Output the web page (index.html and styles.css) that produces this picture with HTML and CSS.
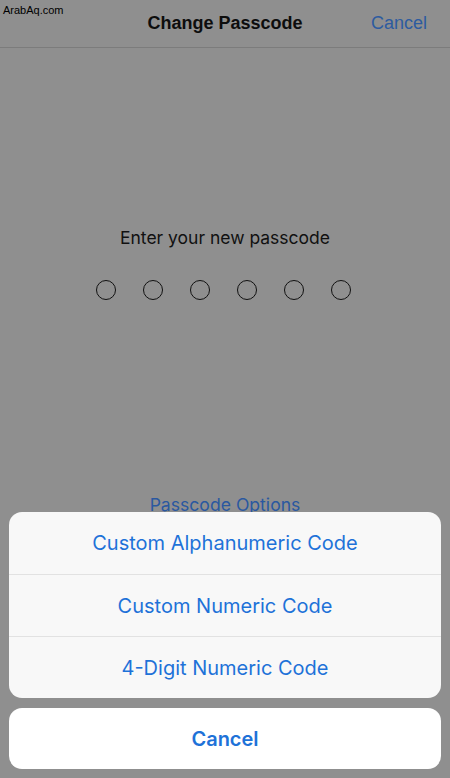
FILE: index.html
```html
<!DOCTYPE html>
<html lang="en">
<head>
  <meta charset="UTF-8" />
  <meta name="viewport" content="width=device-width, initial-scale=1.0"/>
  <title>Change Passcode</title>
  <link rel="stylesheet" href="styles.css">
</head>
<body>
  <div class="screen">
    <div class="watermark">ArabAq.com</div>
    <div class="navbar">
      <div class="nav-title">Change Passcode</div>
      <div class="nav-cancel">Cancel</div>
    </div>

    <div class="content">
      <div class="prompt">Enter your new passcode</div>
      <div class="dots">
        <div class="dot"></div>
        <div class="dot"></div>
        <div class="dot"></div>
        <div class="dot"></div>
        <div class="dot"></div>
        <div class="dot"></div>
      </div>
      <div class="options-link">Passcode Options</div>
    </div>

    <div class="sheet">
      <div class="sheet-group">
        <div class="sheet-item">Custom Alphanumeric Code</div>
        <div class="sheet-item">Custom Numeric Code</div>
        <div class="sheet-item">4-Digit Numeric Code</div>
      </div>
      <div class="sheet-cancel">Cancel</div>
    </div>
  </div>
</body>
</html>
```

FILE: styles.css
```css
body {
  margin: 0;
  background-color: #8f8f8f;
  font-family: "Liberation Sans", Arial, sans-serif;
}

.screen {
  position: relative;
  width: 450px;
  height: 778px;
  overflow: hidden;
  background-color: #8f8f8f;
}

.watermark {
  position: absolute;
  top: 4px;
  left: 3px;
  font-size: 11px;
  color: #000;
}

.navbar {
  height: 47px;
  border-bottom: 1px solid #7c7c7c;
  display: flex;
  align-items: center;
  justify-content: center;
  position: relative;
}

.nav-title {
  font-size: 18px;
  font-weight: bold;
  color: #0d0d0d;
}

.nav-cancel {
  position: absolute;
  right: 23px;
  top: 13px;
  font-size: 18px;
  color: #2c5ba0;
}

.content {
  display: flex;
  flex-direction: column;
  align-items: center;
  padding-top: 179px;
  font-family: Inter, "Liberation Sans", sans-serif;
}

.prompt {
  font-size: 17.5px;
  color: #111;
  height: 22px;
}

.dots {
  display: flex;
  gap: 27px;
  margin-top: 31px;
  margin-right: 3px;
}

.dot {
  width: 20px;
  height: 20px;
  border: 1.5px solid #111;
  border-radius: 50%;
  box-sizing: border-box;
}

.options-link {
  margin-top: 194px;
  font-size: 17.6px;
  color: #2a58a0;
}

.sheet {
  position: absolute;
  left: 9px;
  right: 9px;
  bottom: 9px;
  display: flex;
  flex-direction: column;
  gap: 10px;
  font-family: Inter, "Liberation Sans", sans-serif;
}

.sheet-group {
  background-color: #f8f8f8;
  border-radius: 13px;
  overflow: hidden;
}

.sheet-item {
  height: 62px;
  display: flex;
  align-items: center;
  justify-content: center;
  font-size: 20px;
  color: #1e72d8;
  border-top: 1px solid #e2e2e2;
  box-sizing: border-box;
}

.sheet-item:first-child {
  border-top: none;
}

.sheet-cancel {
  height: 61px;
  background-color: #ffffff;
  border-radius: 13px;
  display: flex;
  align-items: center;
  justify-content: center;
  font-size: 20px;
  font-weight: 600;
  color: #1e72d8;
}
```
